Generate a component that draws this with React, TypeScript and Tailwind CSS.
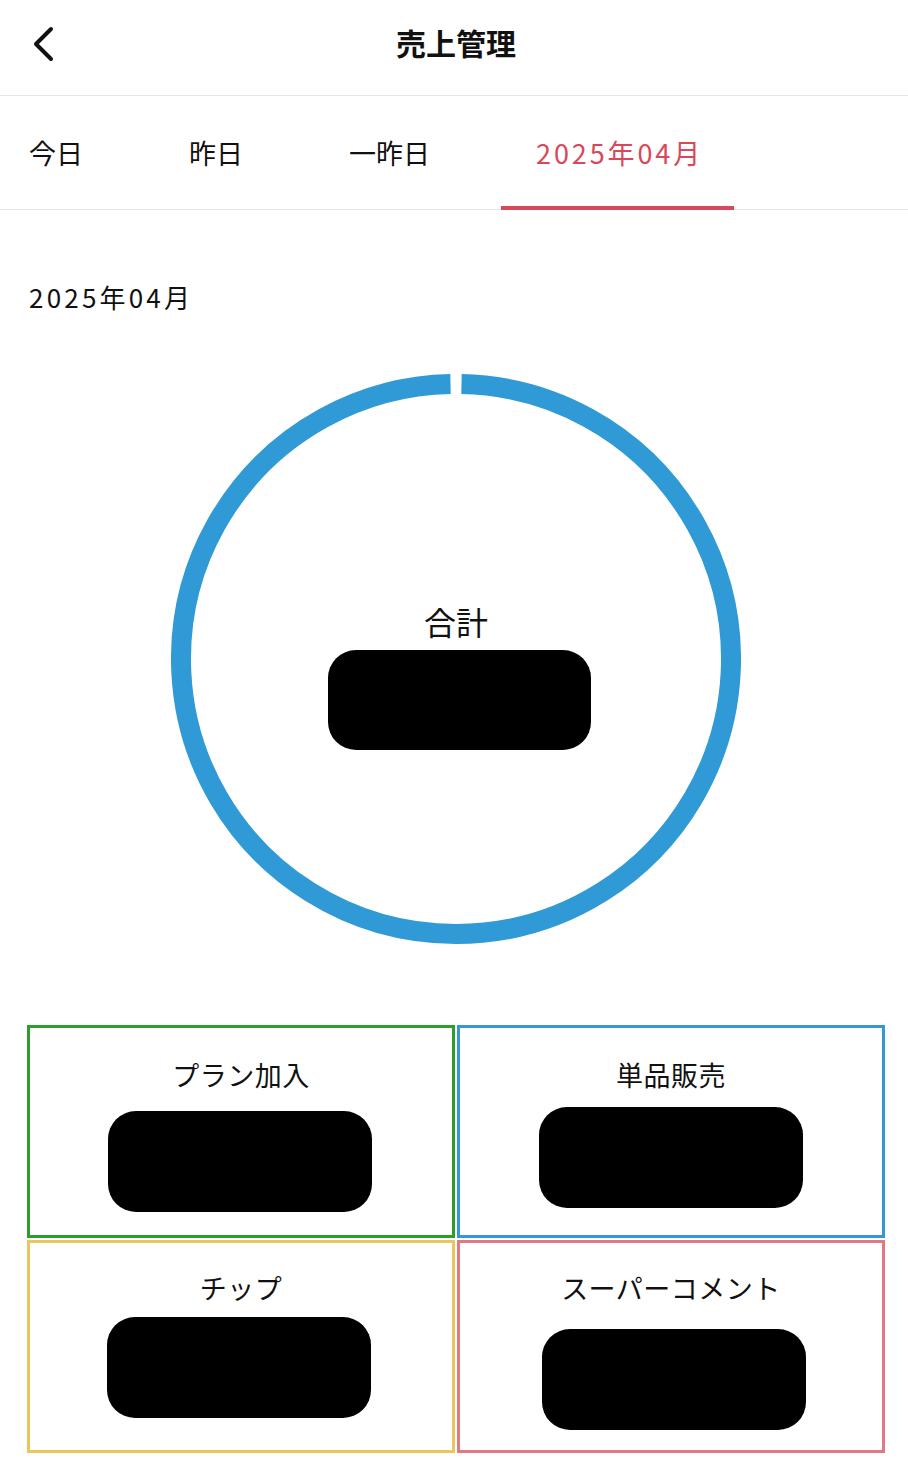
import React from 'react';

const font = { fontFamily: '"Noto Sans CJK JP", "Noto Sans", sans-serif' };

const tabs = [
  { id: 'today', label: '今日' },
  { id: 'yesterday', label: '昨日' },
  { id: 'before', label: '一昨日' },
  { id: 'month', label: '2025年04月' },
];

const cells = [
  { label: 'プラン加入', border: 'border-[#2c9e2c]', pt: 'pt-[28px]', mt: 'mt-[17px]', shift: 'ml-[-2px]' },
  { label: '単品販売', border: 'border-[#3498d4]', pt: 'pt-[28px]', mt: 'mt-[13px]', shift: 'ml-0' },
  { label: 'チップ', border: 'border-[#e8c85e]', pt: 'pt-[26px]', mt: 'mt-[10px]', shift: 'ml-[-4px]' },
  { label: 'スーパーコメント', border: 'border-[#e07886]', pt: 'pt-[26px]', mt: 'mt-[22px]', shift: 'ml-[6px]' },
];

function Ring() {
  // ring with a tiny gap at 12 o'clock
  const r = 275;
  const c = 285;
  const gap = 0.02;
  const a0 = -Math.PI / 2 + gap;
  const a1 = -Math.PI / 2 - gap + Math.PI * 2;
  const x0 = c + r * Math.cos(a0);
  const y0 = c + r * Math.sin(a0);
  const x1 = c + r * Math.cos(a1);
  const y1 = c + r * Math.sin(a1);
  return (
    <svg width="570" height="570" viewBox="0 0 570 570" className="block">
      <path
        d={`M ${x0} ${y0} A ${r} ${r} 0 1 1 ${x1} ${y1}`}
        fill="none"
        stroke="#2f9ad6"
        strokeWidth="20"
      />
    </svg>
  );
}

export default function App() {
  const active = 'month';

  return (
    <div className="min-h-screen w-[908px] bg-white text-[#111]" style={font}>
      {/* Header */}
      <header className="relative h-[96px] border-b border-[#e6e6e6] flex items-center justify-center">
        <button className="absolute left-[30px] top-[26px] p-0">
          <svg width="28" height="36" viewBox="0 0 28 36">
            <polyline
              points="21,3 6,18 21,33"
              fill="none"
              stroke="#111"
              strokeWidth="4"
              strokeLinecap="round"
              strokeLinejoin="round"
            />
          </svg>
        </button>
        <h1 className="text-[30px] font-bold leading-none -mt-[12px] ml-[4px]">売上管理</h1>
      </header>

      {/* Tabs */}
      <nav className="h-[114px] border-b border-[#e6e6e6] flex items-center pl-[29px] gap-[106px]">
        {tabs.map((t) => (
          <div key={t.id} className="relative h-full flex items-center">
            <span
              className={`text-[27px] leading-none ${t.id === active ? 'text-[#d9485a] tracking-[2.9px]' : 'text-[#111]'}`}
            >
              {t.label}
            </span>
            {t.id === active && (
              <div className="absolute bottom-[-1px] left-[-35px] right-[-31px] h-[4px] bg-[#d9485a]" />
            )}
          </div>
        ))}
      </nav>

      {/* Month label */}
      <div className="pl-[29px] pt-[71px] text-[26px] leading-[32px] tracking-[3.2px]">2025年04月</div>

      {/* Ring */}
      <div className="relative ml-[171px] mt-[61px] w-[570px] h-[570px]">
        <Ring />
        <div className="absolute inset-0 flex flex-col items-center pt-[228px]">
          <div className="text-[32px] leading-[38px]">合計</div>
          <div className="mt-[10px] ml-[6px] w-[263px] h-[100px] rounded-[28px] bg-black" />
        </div>
      </div>

      {/* Breakdown grid */}
      <div className="mt-[81px] ml-[27px] w-[858px] grid grid-cols-2 gap-[2px]">
        {cells.map((c) => (
          <div key={c.label} className={`h-[213px] border-[3px] ${c.border} flex flex-col items-center ${c.pt}`}>
            <div className="text-[27px] leading-[38px] tracking-[0.5px]">{c.label}</div>
            <div className={`${c.mt} ${c.shift} w-[264px] h-[101px] rounded-[28px] bg-black`} />
          </div>
        ))}
      </div>
    </div>
  );
}
